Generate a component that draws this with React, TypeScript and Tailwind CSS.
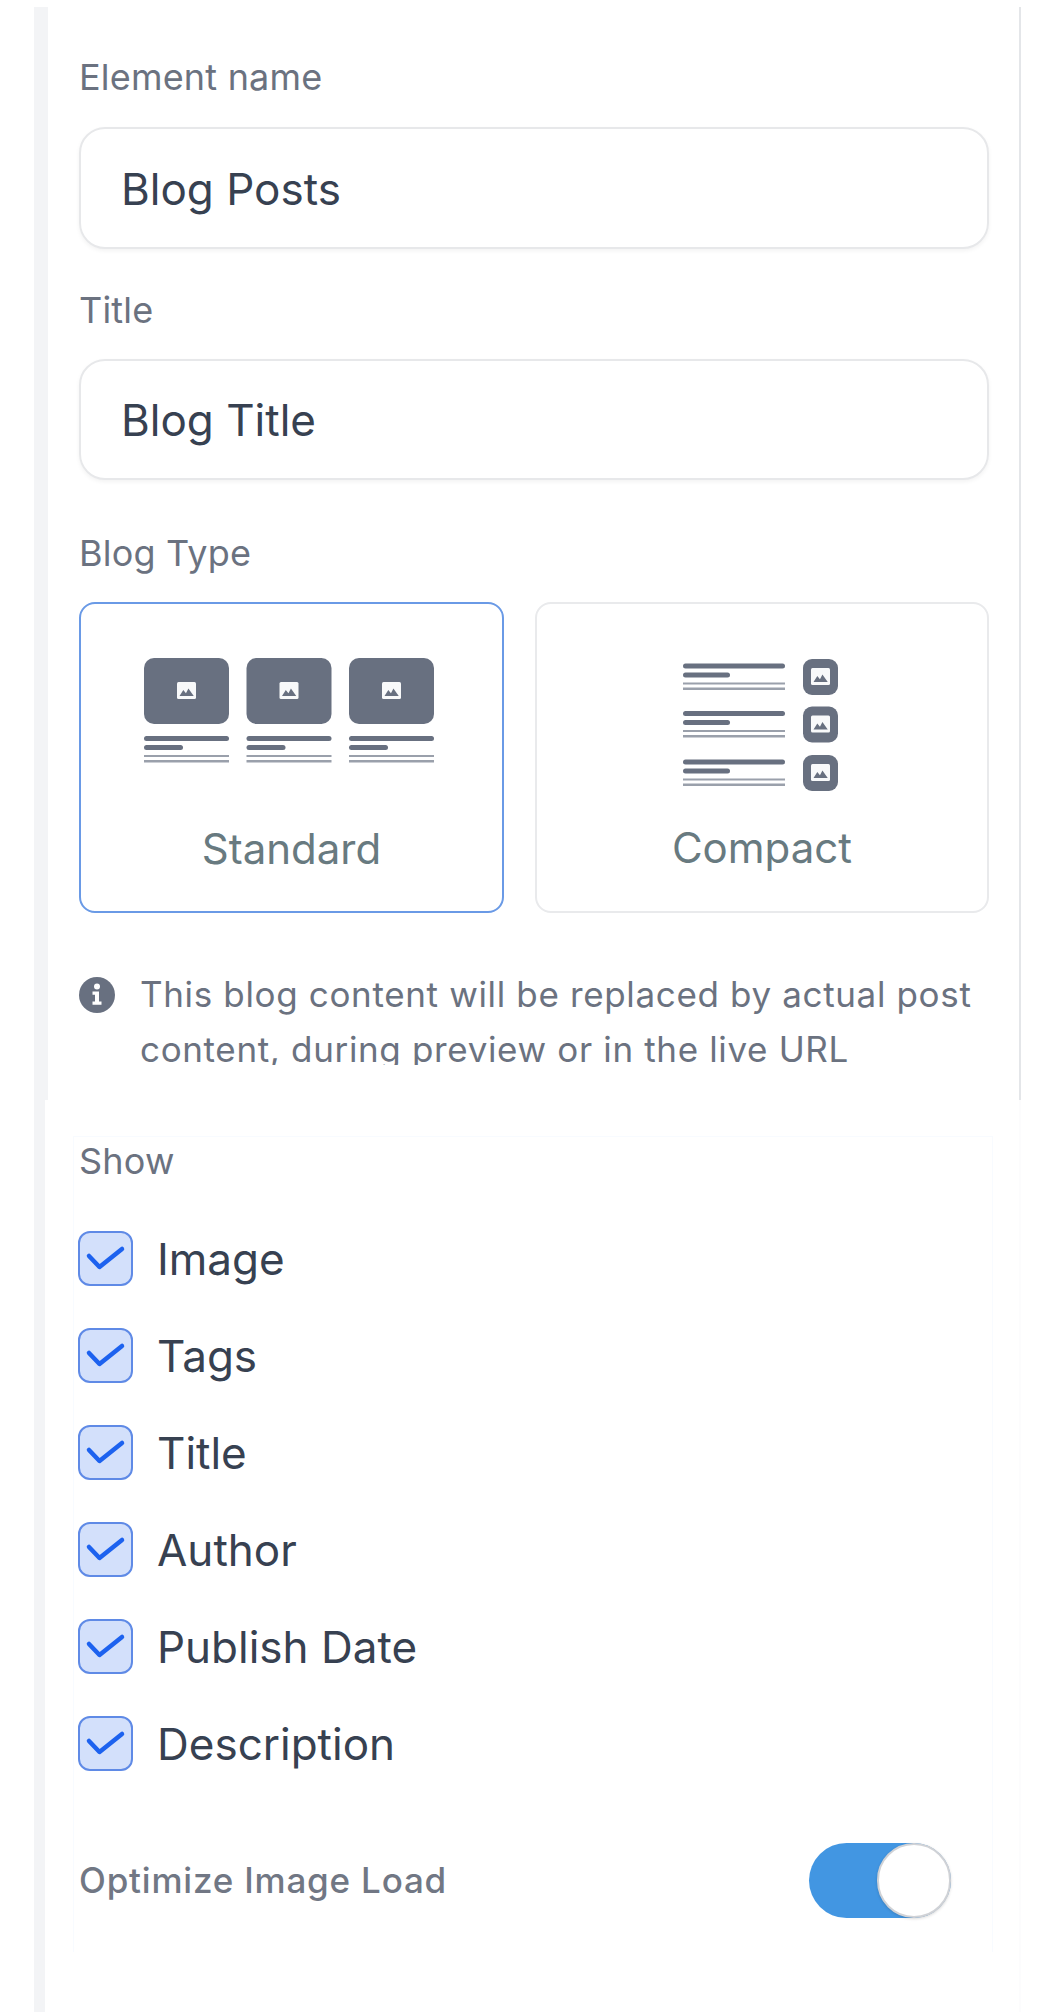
const sans = "font-['Inter',sans-serif]";

function ThumbGlyph({ x, y, w, h }: { x: number; y: number; w: number; h: number }) {
  return (
    <g>
      <rect x={x} y={y} width={w} height={h} rx="1.5" fill="#f8f9fa" />
      <path
        d={`M${x + 2.5} ${y + h - 3} l${w * 0.2} ${-h * 0.36} l${w * 0.14} ${h * 0.2} l${w * 0.13} ${-h * 0.28} l${w * 0.28} ${h * 0.44} z`}
        fill="#687080"
      />
    </g>
  );
}

function TextLines({ x, y, w, short }: { x: number; y: number; w: number; short: number }) {
  return (
    <g>
      <rect x={x} y={y} width={w} height="5" rx="2.5" fill="#687080" />
      <rect x={x} y={y + 9} width={short} height="5" rx="2.5" fill="#687080" />
      <rect x={x} y={y + 19} width={w} height="2" fill="#9aa0ab" />
      <rect x={x} y={y + 24} width={w} height="2.5" fill="#9aa0ab" />
    </g>
  );
}

function StandardIcon() {
  return (
    <svg className="mr-[5px]" width="290" height="110" viewBox="0 0 290 110">
      {[0, 102.5, 205].map((x) => (
        <g key={x}>
          <rect x={x} y="0" width="85" height="66" rx="10" fill="#687080" />
          <ThumbGlyph x={x + 33} y={24} w={19} h={17} />
          <TextLines x={x} y={78} w={85} short={39} />
        </g>
      ))}
    </svg>
  );
}

function CompactIcon() {
  return (
    <svg className="mr-[3px]" width="155" height="132" viewBox="0 0 155 132">
      {[0, 47.5, 96].map((y) => (
        <g key={y}>
          <TextLines x={0} y={y + 4.5} w={102} short={47} />
          <rect x="120" y={y} width="35" height="36" rx="9" fill="#687080" />
          <ThumbGlyph x={128} y={y + 9} w={19} h={17} />
        </g>
      ))}
    </svg>
  );
}

function CheckRow({ label }: { label: string }) {
  return (
    <div className="flex h-[97px] items-center">
      <span className="h-[55px] w-[55px] rounded-[12px] border-2 border-[#5f8ae6] bg-[#d3e0fb]">
        <svg width="51" height="51" viewBox="0 0 51 51" fill="none">
          <path d="M9 23 L19.5 34 L42 16" stroke="#1d62ef" strokeWidth="4.5" strokeLinecap="round" strokeLinejoin="round" />
        </svg>
      </span>
      <span className="ml-[24px] text-[44px] leading-none text-[#374151]">{label}</span>
    </div>
  );
}

const labelClass = "flex h-[44px] items-center text-[36px] tracking-[0.2px] text-[#6b7280]";

export default function App() {
  const options = ["Image", "Tags", "Title", "Author", "Publish Date", "Description"];

  return (
    <div className={`h-[2012px] w-[1048px] overflow-hidden bg-white pt-[7px] ${sans}`}>
      <div className="ml-[34px] h-[1093px] w-[987px] border-r-2 border-l-[14px] border-r-[#e4e6e9] border-l-[#f3f4f6] pt-[48px] pl-[31px]">
        <div className={`${labelClass} text-[#6b7a80]`}>Element name</div>
        <div className="mt-[28px] flex h-[122px] w-[910px] items-center rounded-[26px] border-2 border-[#e7e8ea] pt-[2px] pl-[40px] text-[44px] text-[#374151] shadow-[0_2px_4px_rgba(0,0,0,0.05)]">
          Blog Posts
        </div>
        <div className={`mt-[39px] ${labelClass}`}>Title</div>
        <div className="mt-[27px] flex h-[121px] w-[910px] items-center rounded-[26px] border-2 border-[#e7e8ea] pl-[40px] text-[44px] text-[#374151] shadow-[0_2px_4px_rgba(0,0,0,0.05)]">
          Blog Title
        </div>
        <div className={`mt-[51px] ${labelClass}`}>Blog Type</div>
        <div className="mt-[27px] flex gap-[31px]">
          <div className="flex h-[311px] w-[425px] flex-col items-center rounded-[16px] border-2 border-[#6a9ae6] pt-[54px]">
            <StandardIcon />
            <span className="mt-[56px] text-[42px] leading-[50px] text-[#687a80]">Standard</span>
          </div>
          <div className="flex h-[311px] w-[454px] flex-col items-center rounded-[16px] border-2 border-[#e9eaec] pt-[55px]">
            <CompactIcon />
            <span className="mt-[32px] text-[42px] leading-[50px] text-[#687a80]">Compact</span>
          </div>
        </div>
        <div className="mt-[54px] flex h-[98px] w-[910px] overflow-hidden">
          <svg className="mt-[10px] shrink-0" width="36" height="36" viewBox="0 0 36 36">
            <circle cx="18" cy="18" r="18" fill="#687080" />
            <circle cx="18" cy="9.5" r="3" fill="#fff" />
            <path d="M13.5 14.5h6.5v10h2.5v3.2h-9v-3.2h2.5v-6.8h-2.5z" fill="#fff" />
          </svg>
          <p className="ml-[25px] text-[35px] leading-[55px] tracking-[0.65px] text-[#6b7280]">
            This blog content will be replaced by actual post content, during preview or in the live URL
          </p>
        </div>
      </div>

      <div className="ml-[34px] h-[912px] w-[987px] border-r-2 border-l-[11px] border-r-[#fcfcfd] border-l-[#f3f4f6] pt-[36px] pl-[28px]">
        <div className="h-[816px] w-[920px] border-x border-t border-[#f8fbff] pt-[2px]">
          <div className={`${labelClass} pl-[5px]`}>Show</div>
          <div className="mt-[27px] pl-[4px]">
            {options.map((option) => (
              <CheckRow key={option} label={option} />
            ))}
          </div>
          <div className="mt-[51px] flex items-center justify-between pr-[41px] pl-[5px]">
            <span className="text-[35px] font-medium tracking-[0.8px] text-[#717784]">Optimize Image Load</span>
            <div className="flex h-[75px] w-[142px] justify-end rounded-full bg-[#4296e2]">
              <span className="h-[75px] w-[74px] rounded-full border-2 border-[#d0d2d6] bg-white shadow-[0_1px_3px_rgba(0,0,0,0.15)]" />
            </div>
          </div>
        </div>
      </div>
    </div>
  );
}
